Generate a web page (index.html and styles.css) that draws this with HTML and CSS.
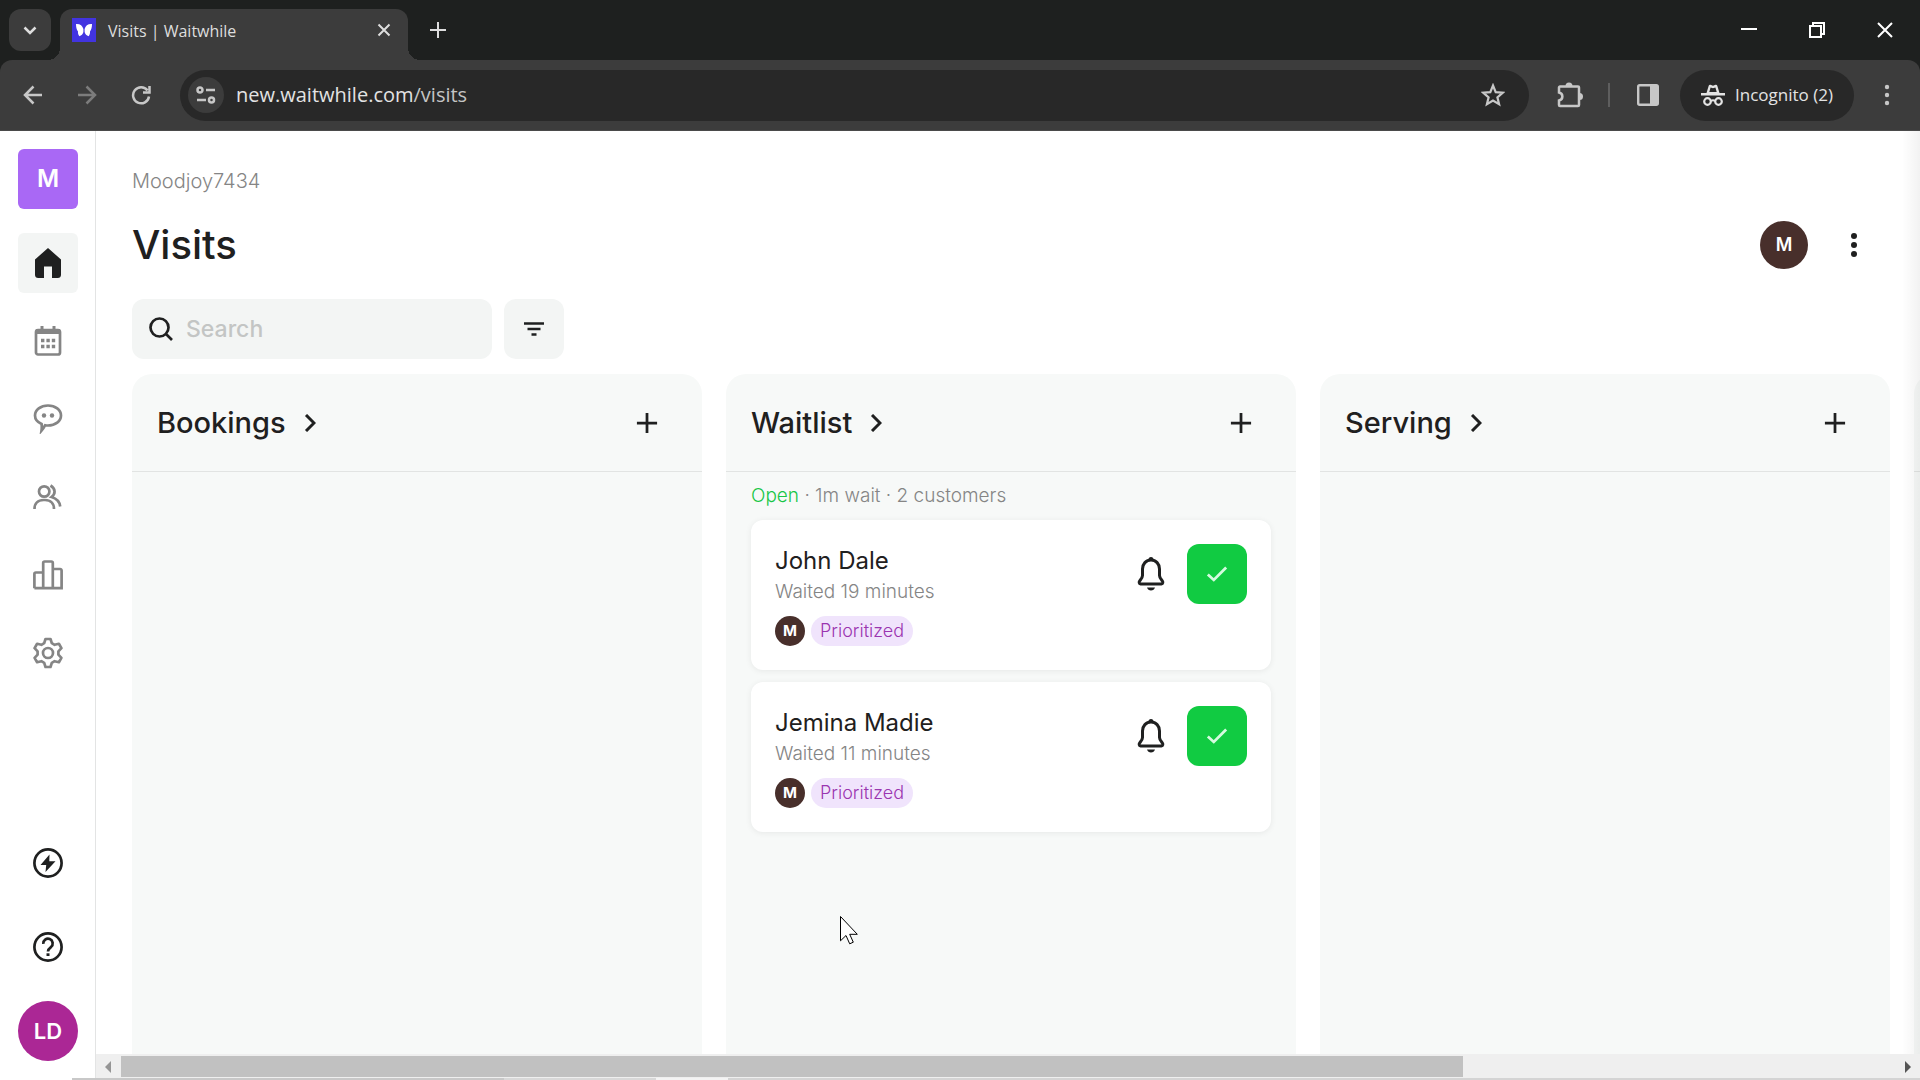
FILE: index.html
```html
<!DOCTYPE html>
<html lang="en">
  <head>
    <meta charset="UTF-8" />
    <meta name="viewport" content="width=device-width, initial-scale=1" />
    <title>Visits | Waitwhile</title>
    <link rel="stylesheet" href="styles.css">
  </head>
  <body>
    <svg class="sprite" aria-hidden="true">
      <symbol id="plus" viewBox="0 0 24 24"><path d="M12 1v22M1 12h22" fill="none" stroke="currentColor" stroke-width="3" /></symbol>
      <symbol id="chevron" viewBox="0 0 12 18"><path d="M2 1l8 8-8 8" fill="none" stroke="currentColor" stroke-width="3" /></symbol>
      <symbol id="bell" viewBox="0 0 28 34">
        <path d="M14 3c-5 0-8.500 4-8.500 9v6.500c0 2.500-1.300 3.700-2.700 5.200-1 1.100-.8 3.300.7 3.300h21c1.500 0 1.700-2.200.7-3.300-1.400-1.500-2.700-2.700-2.700-5.200V12c0-5-3.500-9-8.500-9z" fill="none" stroke="currentColor" stroke-width="3" />
        <path d="M11.500 2.500a2.500 2.500 0 0 1 5 0zM10 30.500h8c-.6 2-2 3-4 3s-3.400-1-4-3z" fill="currentColor" />
      </symbol>
      <symbol id="check" viewBox="0 0 24 18"><path d="M2 9.500l6.500 6L22 2" fill="none" stroke="currentColor" stroke-width="3" /></symbol>
    </svg>

    <div class="browser">
      <div class="tabs">
        <button class="tab-search" aria-label="Search tabs">
          <svg width="14" height="9" viewBox="0 0 14 9"><path d="M1.500 1.500L7 7l5.500-5.500" fill="none" stroke="currentColor" stroke-width="2.500" /></svg>
        </button>
        <div class="tab">
          <svg width="24" height="24" viewBox="0 0 24 24">
            <path fill="#4234e0" d="M0 0h24v24H0z" />
            <path fill="#fff" d="M4 6c4-.3 6.500 1.500 7.400 5v3c-.6 2.200-1.900 3.600-4 4.200C6 16.500 5.900 15 6 13.500 4.600 11.500 4 9 4 6zM20 6c-4-.3-6.500 1.500-7.400 5v3c.6 2.200 1.900 3.600 4 4.200 1.400-1.700 1.500-3.200 1.400-4.700 1.400-2 2-4.500 2-7.500z" />
          </svg>
          <span class="tab-title">Visits | Waitwhile</span>
          <button class="plain" aria-label="Close tab">
            <svg width="14" height="14" viewBox="0 0 14 14"><path d="M1.500 1.500l11 11m0-11l-11 11" fill="none" stroke="currentColor" stroke-width="2" /></svg>
          </button>
        </div>
        <button class="plain new-tab" aria-label="New tab">
          <svg width="16" height="16" viewBox="0 0 16 16"><path d="M8 0v16M0 8h16" fill="none" stroke="currentColor" stroke-width="2" /></svg>
        </button>
        <div class="window-buttons">
          <button class="plain" aria-label="Minimize"><svg width="16" height="16" viewBox="0 0 16 16"><path d="M0 7h16" stroke="currentColor" stroke-width="2" /></svg></button>
          <button class="plain" aria-label="Restore"><svg width="16" height="16" viewBox="0 0 16 16"><path d="M1 4h11v11H1zM4 4V1h11v11h-3" fill="none" stroke="currentColor" stroke-width="2" /></svg></button>
          <button class="plain" aria-label="Close"><svg width="16" height="16" viewBox="0 0 16 16"><path d="M1 1l14 14M15 1L1 15" stroke="currentColor" stroke-width="2" /></svg></button>
        </div>
      </div>

      <div class="toolbar">
        <button class="plain" aria-label="Back">
          <svg width="20" height="20" viewBox="0 0 20 20"><path d="M19 10H2m8.500-8.500L2 10l8.500 8.500" fill="none" stroke="currentColor" stroke-width="2.500" /></svg>
        </button>
        <button class="plain" aria-label="Forward" disabled>
          <svg width="20" height="20" viewBox="0 0 20 20"><path d="M1 10h17M9.500 1.500L18 10l-8.500 8.500" fill="none" stroke="currentColor" stroke-width="2.500" /></svg>
        </button>
        <button class="plain" aria-label="Reload">
          <svg width="20" height="20" viewBox="0 0 20 20"><path d="M16.500 5.500A8 8 0 1 0 18 11.500M18.500 1v6.500H12" fill="none" stroke="currentColor" stroke-width="2.500" /></svg>
        </button>
        <div class="address">
          <button class="site-info" aria-label="Site information">
            <svg width="20" height="18" viewBox="0 0 20 18"><path d="M10 4h9M1 14h9M1.500 4a2.500 2.500 0 1 0 5 0 2.500 2.500 0 1 0-5 0zM13 14a2.500 2.500 0 1 0 5 0 2.500 2.500 0 1 0-5 0z" fill="none" stroke="currentColor" stroke-width="2.500" /></svg>
          </button>
          <a class="url" href="#">new.waitwhile.com<span>/visits</span></a>
          <button class="plain" aria-label="Bookmark">
            <svg width="24" height="24" viewBox="0 0 24 24"><path d="M12 2.500l2.700 6.600 7.100.6-5.400 4.600 1.700 7-6.100-3.700-6.100 3.700 1.700-7-5.400-4.600 7.100-.6z" fill="none" stroke="currentColor" stroke-width="2.200" /></svg>
          </button>
        </div>
        <button class="plain" aria-label="Extensions">
          <svg width="26" height="26" viewBox="0 0 26 26"><path d="M3 4.500h18a1 1 0 0 1 1 1V23a1 1 0 0 1-1 1H3a1 1 0 0 1-1-1v-4.500c4.500-1 4.500-7 0-8V5.500a1 1 0 0 1 1-1z" fill="none" stroke="currentColor" stroke-width="2.500" /><path d="M8.500 4a3.500 3.500 0 0 1 7 0zM22.500 11a3.500 3.500 0 0 1 0 7z" fill="currentColor" /></svg>
        </button>
        <span class="divider"></span>
        <button class="plain side-panel" aria-label="Side panel">
          <svg width="22" height="22" viewBox="0 0 22 22"><rect x="1.200" y="1.200" width="19.600" height="19.600" rx="1.500" fill="none" stroke="currentColor" stroke-width="2.400" /><path d="M13 1h8v20h-8z" fill="currentColor" /></svg>
        </button>
        <button class="incognito">
          <svg width="24" height="22" viewBox="0 0 24 22"><path d="M5.500 9l2.200-7.300c.3-.8 1-1.200 1.800-.9l2.500.9 2.500-.9c.8-.3 1.500.1 1.800.9L18.500 9H24v2.500H0V9zM8.300 8h7.400l-1.300-4.500-2.400.8-2.400-.8z" fill="currentColor" fill-rule="evenodd" /><path d="M3.200 17.500a3.300 3.300 0 1 0 6.600 0 3.300 3.300 0 1 0-6.600 0zM14.200 17.500a3.300 3.300 0 1 0 6.600 0 3.300 3.300 0 1 0-6.600 0zM9.800 17q2.200-1.500 4.400 0" fill="none" stroke="currentColor" stroke-width="2.200" /></svg>
          Incognito (2)
        </button>
        <button class="plain menu" aria-label="Menu">
          <svg width="6" height="22" viewBox="0 0 6 22"><g fill="currentColor"><circle cx="3" cy="3" r="2.200" /><circle cx="3" cy="11" r="2.200" /><circle cx="3" cy="19" r="2.200" /></g></svg>
        </button>
      </div>
    </div>

    <div class="app">
      <nav class="sidebar">
        <a class="location" href="#">M</a>
        <div class="nav">
          <a class="nav-item active" href="#" aria-label="Visits">
            <svg width="28" height="32" viewBox="0 0 28 32"><path d="M14 1L27 12.500V28a3.200 3.200 0 0 1-3.200 3H18V19.500h-8V31H4.200A3.200 3.200 0 0 1 1 28V12.500z" fill="currentColor" /></svg>
          </a>
          <a class="nav-item" href="#" aria-label="Calendar">
            <svg width="28" height="32" viewBox="0 0 28 32"><path d="M8 1v5m12-5v5" stroke="currentColor" stroke-width="3" /><rect x="2" y="5" width="24" height="24.500" rx="2" fill="none" stroke="currentColor" stroke-width="2.700" /><path d="M2 4h24v5H2z" fill="currentColor" /><path d="M7 15.500h3.400m2 0h3.400m2 0h3.400M7 21.500h3.400m2 0h3.400m2 0h3.400" stroke="currentColor" stroke-width="3.400" /></svg>
          </a>
          <a class="nav-item" href="#" aria-label="Messages">
            <svg width="30" height="30" viewBox="0 0 30 30"><path d="M15 1.500c7.300 0 13 4.300 13 10s-5.700 10-13 10c-1 0-1.900-.1-2.800-.3-1.200 2.300-2.400 4-3.700 5.500.3-2 .4-4.300.1-6.700C4.700 18.300 2 15.300 2 11.500c0-5.700 5.700-10 13-10z" fill="none" stroke="currentColor" stroke-width="2.700" /><g fill="currentColor"><circle cx="11" cy="11.500" r="2.200" /><circle cx="19" cy="11.500" r="2.200" /></g></svg>
          </a>
          <a class="nav-item" href="#" aria-label="Customers">
            <svg width="30" height="28" viewBox="0 0 30 28"><path d="M6 8.500a5.200 5.200 0 1 0 10.400 0 5.200 5.200 0 1 0-10.400 0zM1.500 26c0-5.500 3.500-9 9-9h1.500c5.500 0 9 3.500 9 9M17.500 2.500c5.500 3.500 5 8.500 1 11.500 5 1.500 8.200 4.500 8.700 9.500" fill="none" stroke="currentColor" stroke-width="2.700" /></svg>
          </a>
          <a class="nav-item" href="#" aria-label="Analytics">
            <svg width="30" height="30" viewBox="0 0 30 30"><path d="M1.400 28.200h27.200V10.500a1.500 1.500 0 0 0-1.500-1.500h-7M1.400 28.200V14a1.500 1.500 0 0 1 1.500-1.500H10M10.200 28V3a1.500 1.500 0 0 1 1.500-1.500h6.600A1.500 1.500 0 0 1 19.800 3v25" fill="none" stroke="currentColor" stroke-width="2.700" /></svg>
          </a>
          <a class="nav-item" href="#" aria-label="Settings">
            <svg width="30" height="32" viewBox="0 0 30 32"><path d="M12.500 2h5l1.300 4.200 2.800 1.600 4.300-1 2.500 4.300-3 3.200v3.400l3 3.200-2.500 4.300-4.300-1-2.800 1.600-1.300 4.200h-5l-1.300-4.200-2.800-1.600-4.300 1-2.500-4.300 3-3.200v-3.400l-3-3.200 2.500-4.300 4.300 1 2.800-1.600z" fill="none" stroke="currentColor" stroke-width="2.700" stroke-linejoin="round" /><circle cx="15" cy="16" r="5" fill="none" stroke="currentColor" stroke-width="2.700" /></svg>
          </a>
        </div>
        <div class="nav-bottom">
          <a href="#" aria-label="What's new">
            <svg width="30" height="30" viewBox="0 0 30 30"><circle cx="15" cy="15" r="13.600" fill="none" stroke="currentColor" stroke-width="2.700" /><path d="M16.500 6.500L7.500 17h5.700l-.7 7 10-10.800h-6.200z" fill="currentColor" /></svg>
          </a>
          <a href="#" aria-label="Help">
            <svg width="30" height="30" viewBox="0 0 30 30"><circle cx="15" cy="15" r="13.600" fill="none" stroke="currentColor" stroke-width="2.700" /><path d="M10.300 11.800A4.700 4.700 0 1 1 18 15c-1.800 1.400-3 2.300-3 4.500" fill="none" stroke="currentColor" stroke-width="2.700" /><path d="M13.500 21.300h3v2.700h-3z" fill="currentColor" /></svg>
          </a>
          <a class="user" href="#">LD</a>
        </div>
      </nav>

      <main class="main">
        <header class="page-head">
          <p class="account">Moodjoy7434</p>
          <div class="title-row">
            <h1>Visits</h1>
            <button class="avatar" aria-label="Resource M">M</button>
            <button class="plain more" aria-label="More">
              <svg width="8" height="26" viewBox="0 0 8 26"><g fill="currentColor"><circle cx="4" cy="4" r="3" /><circle cx="4" cy="13" r="3" /><circle cx="4" cy="22" r="3" /></g></svg>
            </button>
          </div>
          <div class="filters">
            <label class="search">
              <svg width="24" height="24" viewBox="0 0 24 24"><path d="M1.500 10.500a9 9 0 1 0 18 0 9 9 0 1 0-18 0zM17 17l6 6" fill="none" stroke="currentColor" stroke-width="2.700" /></svg>
              <input type="text" placeholder="Search" aria-label="Search">
            </label>
            <button class="filter" aria-label="Filter">
              <svg width="20" height="14" viewBox="0 0 20 14"><path d="M0 1.500h20M3.500 7h13M7.500 12.500h5" stroke="currentColor" stroke-width="2.700" /></svg>
            </button>
          </div>
        </header>

        <div class="board">
          <section class="column">
            <div class="column-head">
              <h2><a href="#">Bookings <svg width="12" height="18"><use href="#chevron" /></svg></a></h2>
              <button class="plain" aria-label="Add booking"><svg width="22" height="22"><use href="#plus" /></svg></button>
            </div>
          </section>

          <section class="column">
            <div class="column-head">
              <h2><a href="#">Waitlist <svg width="12" height="18"><use href="#chevron" /></svg></a></h2>
              <button class="plain" aria-label="Add to waitlist"><svg width="22" height="22"><use href="#plus" /></svg></button>
            </div>
            <p class="summary"><span>Open</span> · 1m wait · 2 customers</p>
            <div class="cards">
              <article class="card">
                <div class="visit">
                  <h3>John Dale</h3>
                  <p>Waited 19 minutes</p>
                  <div class="tags"><span class="resource">M</span><span class="tag">Prioritized</span></div>
                </div>
                <button class="plain" aria-label="Notify John Dale"><svg width="28" height="34"><use href="#bell" /></svg></button>
                <button class="serve" aria-label="Serve John Dale"><svg width="22" height="18"><use href="#check" /></svg></button>
              </article>
              <article class="card">
                <div class="visit">
                  <h3>Jemina Madie</h3>
                  <p>Waited 11 minutes</p>
                  <div class="tags"><span class="resource">M</span><span class="tag">Prioritized</span></div>
                </div>
                <button class="plain" aria-label="Notify Jemina Madie"><svg width="28" height="34"><use href="#bell" /></svg></button>
                <button class="serve" aria-label="Serve Jemina Madie"><svg width="22" height="18"><use href="#check" /></svg></button>
              </article>
            </div>
          </section>

          <section class="column">
            <div class="column-head">
              <h2><a href="#">Serving <svg width="12" height="18"><use href="#chevron" /></svg></a></h2>
              <button class="plain" aria-label="Add to serving"><svg width="22" height="22"><use href="#plus" /></svg></button>
            </div>
          </section>

          <section class="column">
            <div class="column-head"></div>
          </section>
        </div>

        <div class="scrollbar">
          <svg width="8" height="12" viewBox="0 0 8 12"><path d="M7 0v12L1 6z" fill="#959595" /></svg>
          <div class="track"><div class="thumb"></div></div>
          <svg width="8" height="12" viewBox="0 0 8 12"><path d="M1 0v12l6-6z" fill="#555" /></svg>
        </div>
      </main>
    </div>
    <div class="bottom-edge"></div>

    <svg class="cursor" width="20" height="29" viewBox="0 0 20 29"><path d="M.5.500v24.300l5.500-5.300 3.700 8.300 3.600-1.600-3.600-7.900h7.600z" fill="#fff" stroke="#000" /></svg>
  </body>
</html>
```
FILE: styles.css
```css
* {
  box-sizing: border-box;
}
body {
  display: flex;
  flex-direction: column;
  min-height: 100vh;
  margin: 0;
  overflow-x: hidden;
  background: #fff;
  color: #1f2020;
  font: 20px/30px Inter, "Open Sans", sans-serif;
}
h1, h2, h3, p {
  margin: 0;
  font-weight: 500;
}
a {
  color: inherit;
  text-decoration: none;
}
svg {
  display: block;
  flex: none;
}
button {
  display: flex;
  align-items: center;
  justify-content: center;
  padding: 0;
  border: 0;
  color: inherit;
  font: inherit;
  cursor: pointer;
}
.sprite {
  position: absolute;
  width: 0;
  height: 0;
}
.plain {
  background: none;
}

/* browser window */
.browser {
  background: #1e201f;
  color: #dedede;
  font: 18px/24px "Open Sans", "Noto Sans", sans-serif;
}
.tabs {
  display: flex;
  align-items: center;
  height: 60px;
  padding: 9px 27px 0 9px;
}
.tab-search {
  width: 42px;
  height: 42px;
  margin: 0 9px 9px 0;
  border-radius: 12px;
  background: #3c3c3c;
}
.tab {
  position: relative;
  display: flex;
  align-items: center;
  gap: 12px;
  width: 348px;
  height: 51px;
  padding: 0 17px 9px 12px;
  border-radius: 12px 12px 0 0;
  background: #3c3c3c;
  font-size: 16px;
}
.tab::before,
.tab::after {
  content: "";
  position: absolute;
  bottom: 0;
  width: 12px;
  height: 12px;
}
.tab::before {
  right: 100%;
  background: radial-gradient(circle at 0 0, transparent 12px, #3c3c3c 12px);
}
.tab::after {
  left: 100%;
  background: radial-gradient(circle at 100% 0, transparent 12px, #3c3c3c 12px);
}
.tab-title {
  flex: 1;
  padding-top: 2px;
}
.new-tab {
  margin: 0 auto 9px 22px;
}
.window-buttons {
  display: flex;
  gap: 52px;
  margin-bottom: 9px;
  color: #fff;
}
.toolbar {
  display: flex;
  align-items: center;
  gap: 34px;
  height: 71px;
  padding: 0 30px 0 23px;
  border-bottom: 1px solid #4a4a4a;
  border-radius: 12px 12px 0 0;
  background: #3c3c3c;
  color: #c7c7c7;
}
.toolbar [disabled] {
  color: #7c7c7c;
}
.address {
  display: flex;
  flex: 1;
  align-items: center;
  gap: 12px;
  height: 51px;
  margin: 0 -6px 0 -5px;
  padding: 0 24px 0 8px;
  border-radius: 26px;
  background: #282828;
}
.site-info {
  width: 36px;
  height: 36px;
  border-radius: 50%;
  background: #3c3c3c;
}
.url {
  flex: 1;
  color: #e3e3e3;
  font-size: 20px;
}
.url span {
  color: #c4c4c4;
}
.divider {
  width: 2px;
  height: 24px;
  margin: 0 -7px 0 -9px;
  background: #5e5e5e;
}
.incognito {
  gap: 10px;
  width: 174px;
  height: 51px;
  margin-left: -13px;
  border-radius: 26px;
  background: #282828;
  color: #e3e3e3;
  font-size: 17px;
}
.menu {
  margin-left: -4px;
}

/* application */
.app {
  display: flex;
  flex: 1;
}
.sidebar {
  display: flex;
  flex: none;
  flex-direction: column;
  align-items: center;
  width: 96px;
  padding: 18px 17px 17px 18px;
  border-right: 1px solid #e3e4e4;
}
.location,
.nav-item,
.nav-bottom a {
  display: flex;
  align-items: center;
  justify-content: center;
  width: 60px;
  height: 60px;
  border-radius: 6px;
}
.location {
  background: #a968f5;
  color: #fff;
  font-size: 24px;
  font-weight: 600;
}
.nav {
  display: grid;
  gap: 18px;
  margin: 24px 0;
  color: #858585;
}
.active {
  background: #f3f5f4;
  color: #1f2020;
}
.nav-bottom {
  display: grid;
  gap: 24px;
  margin-top: auto;
}
.nav-bottom .user {
  border-radius: 50%;
  background: #ab2795;
  color: #fff;
  font-size: 22px;
  font-weight: 600;
}
.main {
  display: flex;
  flex: 1;
  flex-direction: column;
  min-width: 0;
}
.page-head {
  padding: 35px 62px 15px 36px;
}
.account {
  color: #858585;
  font-weight: 300;
}
.title-row {
  display: flex;
  align-items: center;
  height: 60px;
  margin: 19px 0 24px;
}
h1 {
  margin-right: auto;
  font-size: 40px;
}
.avatar {
  width: 48px;
  height: 48px;
  margin-right: 42px;
  border-radius: 50%;
  background: #482f2b;
  color: #fff;
  font-size: 18px;
  font-weight: 600;
}
.filters {
  display: flex;
  gap: 12px;
}
.search {
  display: flex;
  align-items: center;
  gap: 13px;
  width: 360px;
  height: 60px;
  padding: 0 17px;
  border-radius: 12px;
  background: #f3f5f4;
}
.search input {
  flex: 1;
  min-width: 0;
  padding: 0;
  border: 0;
  outline: 0;
  background: none;
  font: inherit;
  font-size: 23px;
  font-weight: 500;
}
.search input::placeholder {
  color: #c3c5c4;
}
.filter {
  width: 60px;
  border-radius: 12px;
  background: #f3f5f4;
}
.board {
  display: grid;
  flex: 1;
  grid-auto-columns: calc((100% - 42px) / 3 - 24px / 2);
  grid-auto-flow: column;
  gap: 24px;
  padding-left: 36px;
  overflow: hidden;
}
.column {
  border-radius: 20px 20px 0 0;
  background: #f7f9f8;
}
.column-head {
  display: flex;
  align-items: center;
  justify-content: space-between;
  height: 98px;
  padding: 0 44px 0 25px;
  border-bottom: 1px solid #e2e4e3;
}
h2 {
  font-size: 29px;
}
h2 a {
  display: flex;
  align-items: center;
  gap: 18px;
}
.summary {
  padding: 9px 25px;
  color: #858585;
  font-size: 19px;
  font-weight: 300;
}
.summary span {
  color: #17c647;
}
.cards {
  display: grid;
  gap: 12px;
  padding: 0 25px;
}
.card {
  display: flex;
  align-items: flex-start;
  gap: 22px;
  min-height: 150px;
  padding: 24px;
  border-radius: 12px;
  background: #fff;
  box-shadow: 0 1px 6px rgba(0, 0, 0, 0.07);
}
.visit {
  flex: 1;
}
.card h3 {
  font-size: 24px;
  font-weight: 400;
  line-height: 33px;
}
.card p {
  color: #858585;
  font-size: 19px;
  font-weight: 300;
}
.card .plain,
.serve {
  height: 60px;
}
.serve {
  width: 60px;
  border-radius: 12px;
  background: #11cb42;
  color: #d5fbdf;
}
.tags {
  display: flex;
  gap: 6px;
  margin-top: 9px;
}
.resource {
  width: 30px;
  border-radius: 50%;
  background: #482f2b;
  color: #fff;
  font-size: 15px;
  font-weight: 700;
  text-align: center;
}
.tag {
  padding: 0 9px;
  border-radius: 15px;
  background: #f0e4fc;
  color: #9b35b0;
  font-size: 18px;
  font-weight: 300;
}

.scrollbar {
  display: flex;
  align-items: center;
  gap: 9px;
  height: 24px;
  padding: 2px 8px 1px;
  background: #efefef;
}
.track {
  flex: 1;
  align-self: stretch;
}
.thumb {
  width: calc(76% - 6px);
  height: 100%;
  background: #c1c1c1;
}
.bottom-edge {
  height: 2px;
  background: linear-gradient(90deg, #fff 72px, #c8c8c8 72px 504px, #d8d8d8 504px 656px, #f4f4f4 656px 728px, #d4d4d4 728px);
}
.cursor {
  position: absolute;
  top: 916px;
  left: 840px;
}

/* shadow where the board runs off the right edge */
.main {
  position: relative;
}
.main::after {
  content: "";
  position: absolute;
  top: 0;
  right: 0;
  bottom: 24px;
  width: 18px;
  background: linear-gradient(90deg, rgba(0, 0, 0, 0), rgba(0, 0, 0, 0.05));
  pointer-events: none;
}
```
